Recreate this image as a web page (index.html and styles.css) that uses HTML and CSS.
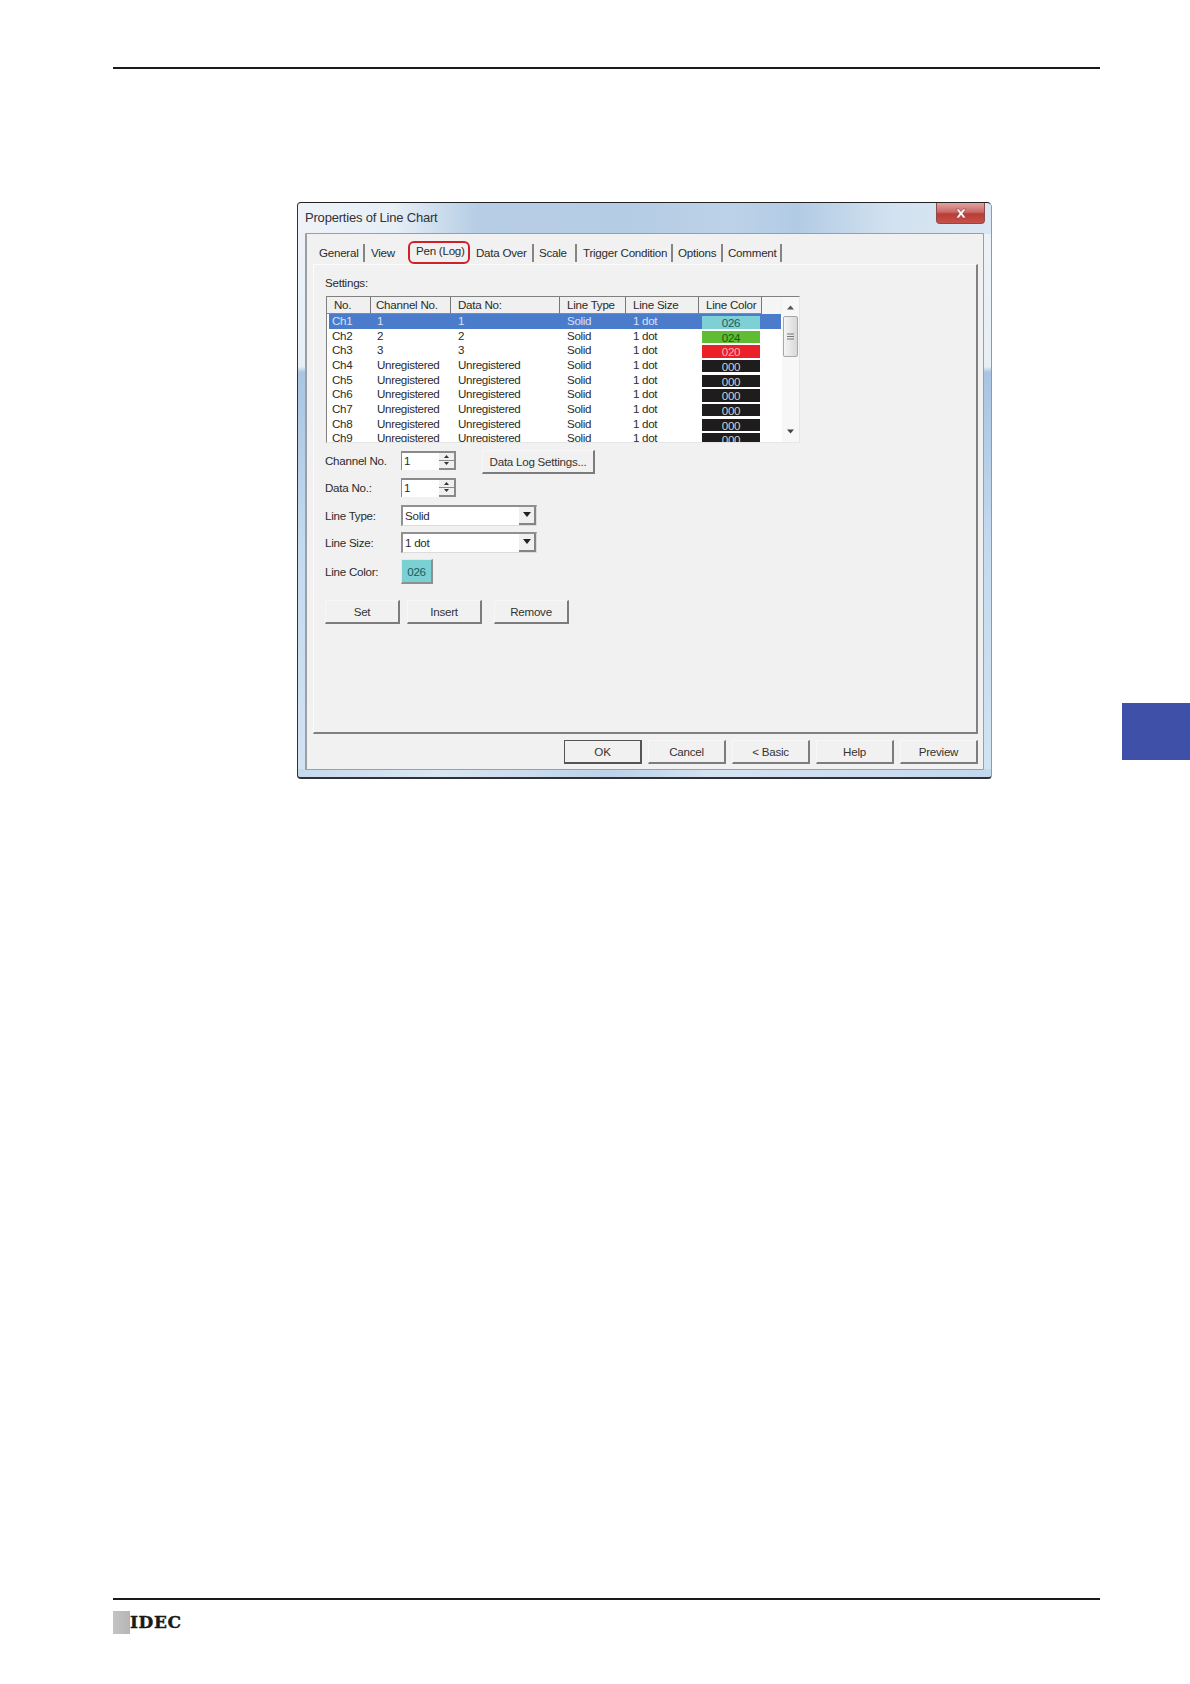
FILE: index.html
```html
<!DOCTYPE html>
<html lang="en">
<head>
<meta charset="utf-8">
<title>Properties of Line Chart</title>
<link rel="stylesheet" href="styles.css">
</head>
<body>
<div class="page">
  <div class="rule rule-top"></div>
  <div class="thumb-tab"></div>

  <section class="dialog">
    <header class="titlebar">
      <span class="title">Properties of Line Chart</span>
      <span class="close"><svg width="14" height="11" viewBox="0 0 14 11"><path d="M2 1h3l2 2.600L9 1h3L8.700 5.400 12 10H9L7 7.200 5 10H2l3.300-4.600z" fill="#fff" stroke="#8a3a3a" stroke-width=".6"/></svg></span>
    </header>
    <div class="client">
      <nav class="tabs">
        <span class="tab t-general">General</span>
        <span class="tab t-view">View</span>
        <span class="tab t-pen">Pen (Log)</span>
        <span class="tab t-over">Data Over</span>
        <span class="tab t-scale">Scale</span>
        <span class="tab t-trig">Trigger Condition</span>
        <span class="tab t-opt">Options</span>
        <span class="tab t-com">Comment</span>
      </nav>
      <div class="panel">
        <div class="settings-label">Settings:</div>
        <div class="list">
          <div class="list-main">
            <div class="row head">
              <span>No.</span><span>Channel No.</span><span>Data No:</span><span>Line Type</span><span>Line Size</span><span>Line Color</span><span></span>
            </div>
            <div class="body">
              <div class="row sel"><span>Ch1</span><span>1</span><span>1</span><span>Solid</span><span>1 dot</span><b class="sw c26">026</b></div>
              <div class="row"><span>Ch2</span><span>2</span><span>2</span><span>Solid</span><span>1 dot</span><b class="sw c24">024</b></div>
              <div class="row"><span>Ch3</span><span>3</span><span>3</span><span>Solid</span><span>1 dot</span><b class="sw c20">020</b></div>
              <div class="row"><span>Ch4</span><span>Unregistered</span><span>Unregistered</span><span>Solid</span><span>1 dot</span><b class="sw c00">000</b></div>
              <div class="row"><span>Ch5</span><span>Unregistered</span><span>Unregistered</span><span>Solid</span><span>1 dot</span><b class="sw c00">000</b></div>
              <div class="row"><span>Ch6</span><span>Unregistered</span><span>Unregistered</span><span>Solid</span><span>1 dot</span><b class="sw c00">000</b></div>
              <div class="row"><span>Ch7</span><span>Unregistered</span><span>Unregistered</span><span>Solid</span><span>1 dot</span><b class="sw c00">000</b></div>
              <div class="row"><span>Ch8</span><span>Unregistered</span><span>Unregistered</span><span>Solid</span><span>1 dot</span><b class="sw c00">000</b></div>
              <div class="row"><span>Ch9</span><span>Unregistered</span><span>Unregistered</span><span>Solid</span><span>1 dot</span><b class="sw c00">000</b></div>
            </div>
          </div>
          <div class="vscroll">
            <svg class="sarrow" width="9" height="5" viewBox="0 0 9 5"><path d="M4.500 0.500 8 4.500H1z" fill="#555"/></svg>
            <div class="thumb"><svg width="7" height="7" viewBox="0 0 7 7"><path d="M0 1h7M0 3.500h7M0 6h7" stroke="#777" stroke-width="1"/></svg></div>
            <svg class="sarrow down" width="9" height="5" viewBox="0 0 9 5"><path d="M1 .5h7L4.500 4.500z" fill="#444"/></svg>
          </div>
        </div>

        <div class="form">
          <div class="frow r-chan">
            <label>Channel No.</label>
            <div class="spin"><span>1</span><div class="spin-btns"><svg width="5" height="3" viewBox="0 0 5 3"><path d="M2.500 0 5 3H0z" fill="#333"/></svg><svg width="5" height="3" viewBox="0 0 5 3"><path d="M0 0h5L2.500 3z" fill="#333"/></svg></div></div>
            <button class="btn dls">Data Log Settings...</button>
          </div>
          <div class="frow r-data">
            <label>Data No.:</label>
            <div class="spin"><span>1</span><div class="spin-btns"><svg width="5" height="3" viewBox="0 0 5 3"><path d="M2.500 0 5 3H0z" fill="#333"/></svg><svg width="5" height="3" viewBox="0 0 5 3"><path d="M0 0h5L2.500 3z" fill="#333"/></svg></div></div>
          </div>
          <div class="frow r-type">
            <label>Line Type:</label>
            <div class="combo"><span>Solid</span><i class="drop"><svg width="8" height="5" viewBox="0 0 8 5"><path d="M0 0h8L4 5z" fill="#222"/></svg></i></div>
          </div>
          <div class="frow r-size">
            <label>Line Size:</label>
            <div class="combo"><span>1 dot</span><i class="drop"><svg width="8" height="5" viewBox="0 0 8 5"><path d="M0 0h8L4 5z" fill="#222"/></svg></i></div>
          </div>
          <div class="frow r-color">
            <label>Line Color:</label>
            <button class="color-btn">026</button>
          </div>
          <div class="actions">
            <button class="btn act">Set</button>
            <button class="btn act">Insert</button>
            <button class="btn act act-r">Remove</button>
          </div>
        </div>
      </div>
      <div class="footer-btns">
        <button class="btn f default">OK</button>
        <button class="btn f">Cancel</button>
        <button class="btn f">&lt; Basic</button>
        <button class="btn f">Help</button>
        <button class="btn f">Preview</button>
      </div>
    </div>
  </section>

  <footer class="foot">
    <div class="rule"></div>
    <div class="logo"><i class="logo-box"></i><span class="logo-text">IDEC</span></div>
  </footer>
</div>
</body>
</html>
```
FILE: styles.css
```css
* { box-sizing: border-box; }
html, body { margin: 0; padding: 0; background: #fff; }
.page {
  position: relative;
  width: 1190px;
  height: 1684px;
  display: flex;
  flex-direction: column;
  font-family: "Liberation Sans", Arial, sans-serif;
  overflow: hidden;
}
.rule { height: 2px; background: #1a1a1a; }
.rule-top { margin: 67px 90px 0 113px; }
.thumb-tab {
  position: absolute;
  left: 1122px;
  top: 703px;
  width: 68px;
  height: 57px;
  background: #3f50a8;
}

/* dialog */
.dialog {
  margin: 133px 0 0 297px;
  width: 695px;
  height: 577px;
  display: flex;
  flex-direction: column;
  padding: 0 7px 7px 7px;
  border-top: 1px solid #222;
  border-left: 1px solid #333;
  border-right: 1px solid #8d9aa8;
  border-bottom: 2px solid #2e3238;
  border-radius: 4px 5px 4px 4px;
  background:
    linear-gradient(90deg, #eef3f9 0, #e6eef6 14%, #b6cde5 26%, #b4cce4 48%, #bcd2e8 62%, #b2cbe4 72%, #d3e2f0 86%, #dbe7f3 100%) top / 100% 31px no-repeat,
    linear-gradient(90deg, #c6d9ec 0, #dbe7f3 20%, #bcd2e8 45%, #d6e4f2 60%, #c4d8ec 100%) bottom / 100% 8px no-repeat,
    linear-gradient(180deg, #eef3f8 0, #e6eef6 28.5%, #a9c5e2 29.500%, #c4daef 60%, #d2e3f2 100%);
  font-size: 11.6px;
  letter-spacing: -.25px;
  color: #2b2b2b;
}
.titlebar {
  height: 30px;
  flex: none;
  display: flex;
  justify-content: space-between;
}
.title { font-size: 13px; letter-spacing: -.2px; margin: 7px 0 0 0; color: #333; }
.close {
  width: 49px;
  height: 21px;
  margin-right: -1px;
  display: flex;
  align-items: center;
  justify-content: center;
  border: 1px solid #8c4a4a;
  border-top: 0;
  border-radius: 0 0 4px 4px;
  background: linear-gradient(180deg, #e2a3a0 0, #c96a66 45%, #b93c36 55%, #c5524b 100%);
}
.client {
  flex: 1;
  display: flex;
  flex-direction: column;
  background: #f1f1f1;
  border: 2px solid #9a9fa6;
  border-top-width: 1px;
  border-right-width: 1px;
  border-bottom-width: 1px;
  border-radius: 1px;
  padding: 0 6px 0 6px;
}

/* tabs */
.tabs {
  height: 30px;
  flex: none;
  display: flex;
  align-items: flex-end;
  padding-left: 6px;
  font-size: 11.6px;
}
.tab {
  display: flex;
  align-items: center;
  height: 18px;
  margin-bottom: 2px;
  padding-right: 6px;
  border-right: 2px solid #858585;
  line-height: 1;
  white-space: nowrap;
}
.t-general { width: 46px; }
.t-view { padding: 0; margin-left: 6px; width: 27px; border-right: 0; }
.t-pen {
  width: 62px;
  height: 23px;
  margin: 0 6px 0 10px;
  padding: 0 0 3px 6px;
  border: 2px solid #d0202a;
  border-radius: 6px;
}
.t-over { width: 58px; }
.t-scale { margin-left: 5px; width: 38px; }
.t-trig { margin-left: 6px; width: 90px; }
.t-opt { margin-left: 5px; width: 45px; }
.t-com { margin-left: 5px; width: 54px; }

.panel {
  height: 470px;
  flex: none;
  width: 665px;
  padding: 11px 0 0 11px;
  border-top: 1px solid #fbfbfb;
  border-left: 1px solid #fbfbfb;
  border-right: 2px solid #808080;
  border-bottom: 2px solid #808080;
  display: flex;
  flex-direction: column;
}
.settings-label { height: 20px; line-height: 14px; }

/* list */
.list {
  width: 474px;
  height: 147px;
  margin-left: 1px;
  display: flex;
  background: #fff;
  border-top: 1px solid #808080;
  border-left: 1px solid #808080;
  border-bottom: 1px solid #e6e6e6;
  border-right: 1px solid #e6e6e6;
  overflow: hidden;
}
.list-main { width: 455px; flex: none; overflow: hidden; }
.row {
  display: grid;
  height: 14.670px;
  line-height: 14px;
  white-space: nowrap;
}
.row > span { padding-left: 7px; }
.head {
  grid-template-columns: 44px 80px 109px 66px 73px 63px 19px;
  height: 17px;
  background: #f0f0f0;
  line-height: 15px;
}
.head > span {
  border-right: 1px solid #777;
  border-bottom: 1px solid #8a8a8a;
}
.head > span:nth-child(2) { padding-left: 5px; }
.head > span:last-child { border-right: 0; border-bottom: 0; background: #f5f5f5; }
.body { padding-left: 2px; height: 130px; overflow: hidden; letter-spacing: -.33px; }
.body .row { grid-template-columns: 42px 80px 109px 66px 73px 61px 21px; width: 452px; }
.body .row > span:first-child { padding-left: 3px; }
.body .row > span:nth-child(2) { padding-left: 6px; }
.sel { background: #4b7ccb; color: #d5e2f6; }
.sw {
  font-weight: 400;
  height: 12.500px;
  margin: 2px 0 0 3px;
  text-align: center;
  line-height: 14px;
  overflow: hidden;
}
.c26 { background: #7dd0d3; color: #205a60; }
.c24 { background: #5fbc33; color: #1b5a12; }
.c20 { background: #ec2029; color: #f7b7b0; }
.c00 { background: #1e1c1d; color: #cfcfcf; }
.vscroll {
  flex: 1;
  background: #f7f7f7;
  display: flex;
  flex-direction: column;
  align-items: center;
  padding-top: 8px;
}
.thumb {
  width: 15px;
  height: 41px;
  margin-top: 6px;
  border: 1px solid #a8a8a8;
  border-radius: 2px;
  background: linear-gradient(90deg, #f4f4f4, #d8d8d8);
  display: flex;
  align-items: center;
  justify-content: center;
}
.sarrow.down { margin-top: auto; margin-bottom: 8px; }

/* form */
.form { display: flex; flex-direction: column; }
.frow { display: flex; align-items: center; }
.frow label { width: 76px; flex: none; }
.r-chan { margin-top: 5px; height: 24px; }
.r-data { margin-top: 4px; height: 22px; }
.r-type { margin-top: 6px; height: 22px; }
.r-size { margin-top: 5px; height: 22px; }
.r-color { margin-top: 6px; height: 25px; }
.spin {
  width: 55px;
  height: 19px;
  display: flex;
  justify-content: space-between;
  background: #fff;
  border-top: 2px solid #8a8a8a;
  border-left: 1px solid #8a8a8a;
  padding-left: 2px;
  line-height: 15px;
}
.spin-btns {
  width: 17px;
  display: flex;
  flex-direction: column;
  align-items: center;
  justify-content: space-around;
  border-bottom: 2px solid #8a8a8a;
  border-right: 2px solid #8a8a8a;
  background-image: linear-gradient(#f0f0f0 45%, #8a8a8a 45%, #8a8a8a 53%, #f0f0f0 53%);
}
.combo {
  width: 136px;
  height: 21px;
  display: flex;
  justify-content: space-between;
  background: #fff;
  border-top: 2px solid #909090;
  border-left: 2px solid #909090;
  border-right: 1px solid #dcdcdc;
  border-bottom: 1px solid #dcdcdc;
  padding-left: 2px;
  line-height: 18px;
}
.drop {
  width: 17px;
  display: flex;
  align-items: center;
  justify-content: center;
  background: #f0f0f0;
  border-right: 2px solid #858585;
  border-bottom: 2px solid #858585;
}
.btn {
  font: inherit;
  letter-spacing: inherit;
  color: #333;
  padding: 0;
  background: #f1f1f1;
  border: 1px solid #f7f7f7;
  border-right: 2px solid #7c7c7c;
  border-bottom: 2px solid #7c7c7c;
  height: 24px;
}
.dls { width: 113px; margin: 4px 0 0 26px; }
.color-btn {
  font: inherit;
  letter-spacing: inherit;
  width: 32px;
  height: 25px;
  padding: 0;
  color: #1b5a60;
  background: #7ad0d3;
  border: 1px solid #e8e8e8;
  border-right: 2px solid #8f8f8f;
  border-bottom: 2px solid #8f8f8f;
}
.actions { display: flex; gap: 7px; margin-top: 16px; }
.act { width: 75px; }
.act-r { margin-left: 5px; }

.footer-btns {
  display: flex;
  justify-content: flex-end;
  gap: 6px;
  margin-top: 6px;
  width: 665px;
}
.f { width: 78px; height: 24px; }
.default { border: 1px solid #555; border-right: 2px solid #555; border-bottom: 2px solid #555; }

/* footer */
.foot { margin: auto 90px 0 113px; height: 86px; }
.logo { display: flex; align-items: center; height: 24px; margin-top: 10px; }
.logo-box { width: 17px; height: 23px; background: linear-gradient(90deg, #c4c4c4, #b5b5b5); flex: none; }
.logo-text {
  font-family: "DejaVu Serif", serif;
  font-weight: 700;
  font-size: 17px;
  letter-spacing: .6px;
  -webkit-text-stroke: .4px #1a1a1a;
  color: #1a1a1a;
  line-height: 1;
}
```
